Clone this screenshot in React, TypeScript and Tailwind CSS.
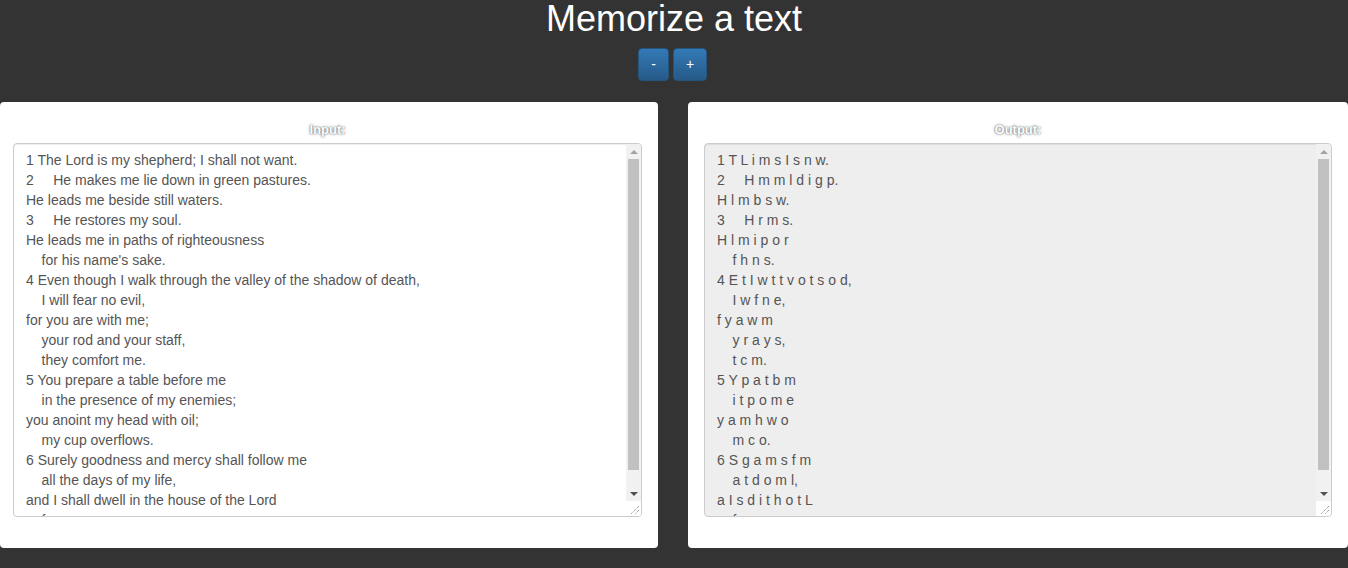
import React from "react";

const inputText = `1 The Lord is my shepherd; I shall not want.
2     He makes me lie down in green pastures.
He leads me beside still waters.
3     He restores my soul.
He leads me in paths of righteousness
    for his name's sake.
4 Even though I walk through the valley of the shadow of death,
    I will fear no evil,
for you are with me;
    your rod and your staff,
    they comfort me.
5 You prepare a table before me
    in the presence of my enemies;
you anoint my head with oil;
    my cup overflows.
6 Surely goodness and mercy shall follow me
    all the days of my life,
and I shall dwell in the house of the Lord
    forever.`;

// keep the first letter of each word, plus numbers and the trailing . or ,
function initials(text: string) {
  return text
    .split("\n")
    .map((line) => {
      const lead = line.match(/^\s*/)?.[0] ?? "";
      const words = line.trim().split(/(\s+)/);
      return (
        lead +
        words
          .map((w) => {
            if (/^\s+$/.test(w)) return w.length > 1 ? w : " ";
            if (/^\d+$/.test(w)) return w;
            const punct = w.match(/[.,]$/)?.[0] ?? "";
            return w[0] + punct;
          })
          .join("")
      );
    })
    .join("\n");
}

function Scrollbar() {
  return (
    <div className="w-[15px] flex flex-col shrink-0">
      <div className="flex-1 bg-[#f1f1f1] flex flex-col">
        <div className="h-[15px] flex items-center justify-center">
          <div className="w-0 h-0 border-x-[4px] border-x-transparent border-b-[4px] border-b-[#a3a3a3]" />
        </div>
        <div className="h-[311px] mx-[2px] bg-[#c1c1c1]" />
        <div className="flex-1" />
        <div className="h-[15px] flex items-center justify-center">
          <div className="w-0 h-0 border-x-[4px] border-x-transparent border-t-[4px] border-t-[#505050]" />
        </div>
      </div>
      <div className="h-[15px] bg-white flex items-end justify-end">
        <svg width="15" height="15" viewBox="0 0 15 15">
          <path d="M13 5 L5 13 M13 9 L9 13" stroke="#7a7a7a" strokeWidth="1" strokeDasharray="1 1" />
        </svg>
      </div>
    </div>
  );
}

function TextBox({ text, readOnly }: { text: string; readOnly?: boolean }) {
  return (
    <div
      className={`h-[374px] flex border border-[#ccc] rounded-[4px] shadow-[inset_0_1px_1px_rgba(0,0,0,0.075)] overflow-hidden ${
        readOnly ? "bg-[#eee]" : "bg-white"
      }`}
    >
      <div className="flex-1 overflow-hidden pt-[6px] px-[12px] whitespace-pre text-[14px] leading-[20px] text-[#555]">
        {text}
      </div>
      <Scrollbar />
    </div>
  );
}

function Panel({ label, children, className }: { label: string; children: React.ReactNode; className?: string }) {
  return (
    <div className={`bg-white rounded-[4px] pt-[18px] pb-[31px] ${className ?? ""}`}>
      <div className="text-center text-[13px] leading-[20px] font-bold text-white [text-shadow:0_0_3px_#777,0_0_1px_#555] mb-[3px]">
        {label}
      </div>
      {children}
    </div>
  );
}

export default function App() {
  return (
    <div className="min-h-[568px] bg-[#333] font-['Liberation_Sans',Arial,sans-serif]">
      <h1 className="text-center text-white text-[36px] leading-[38px]">Memorize a text</h1>
      <div className="flex justify-center gap-[4px] mt-[10px] pr-[3px]">
        <button className="h-[33px] w-[31px] text-[14px] text-white rounded-[4px] border border-[#245580] bg-gradient-to-b from-[#337ab7] to-[#265a88]">
          -
        </button>
        <button className="h-[33px] w-[34px] text-[14px] text-white rounded-[4px] border border-[#245580] bg-gradient-to-b from-[#337ab7] to-[#265a88]">
          +
        </button>
      </div>
      <div className="flex gap-[30px] mt-[21px] pb-[20px]">
        <Panel label="Input:" className="w-[658px] pl-[13px] pr-[16px]">
          <TextBox text={inputText} />
        </Panel>
        <Panel label="Output:" className="flex-1 pl-[16px] pr-[16px]">
          <TextBox text={initials(inputText)} readOnly />
        </Panel>
      </div>
    </div>
  );
}
